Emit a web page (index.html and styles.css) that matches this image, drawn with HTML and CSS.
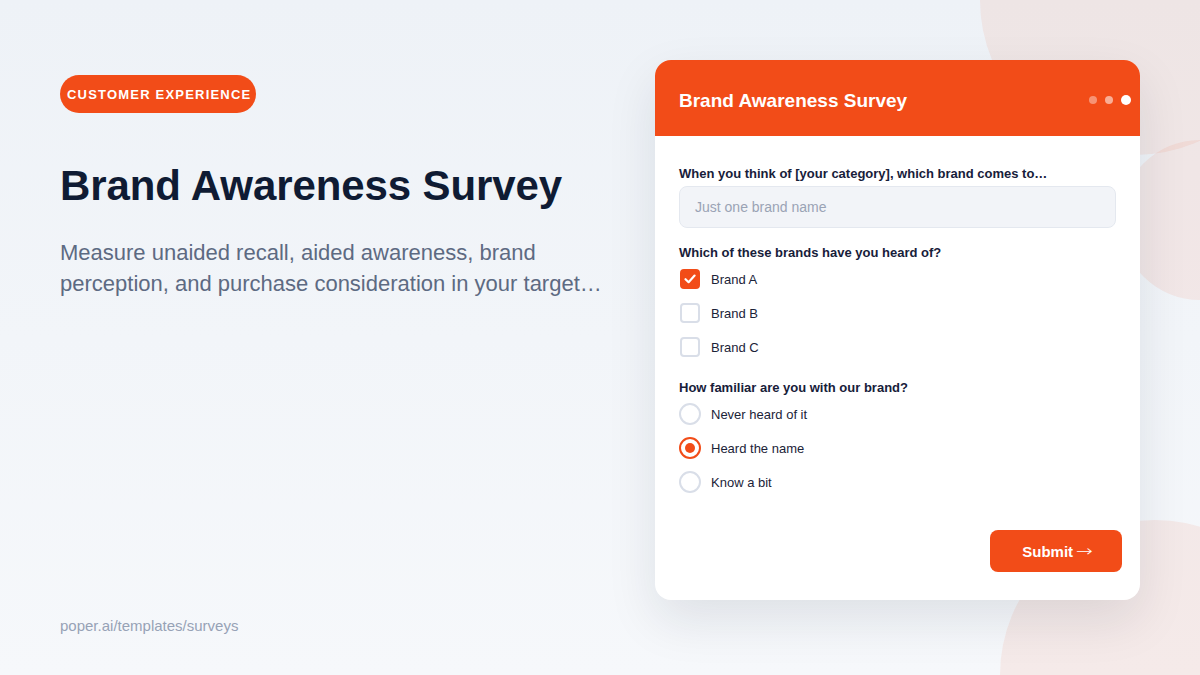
FILE: index.html
```html
<!DOCTYPE html>
<html lang="en">
<head>
<meta charset="utf-8">
<title>Brand Awareness Survey</title>
<link rel="stylesheet" href="styles.css">
</head>
<body>
<div class="page">
  <div class="blob blob-1"></div>
  <div class="blob blob-2"></div>
  <div class="blob blob-3"></div>

  <section class="intro">
    <span class="badge">CUSTOMER EXPERIENCE</span>
    <h1 class="title">Brand Awareness Survey</h1>
    <p class="desc">Measure unaided recall, aided awareness, brand perception, and purchase consideration in your target…</p>
    <div class="source">poper.ai/templates/surveys</div>
  </section>

  <section class="card">
    <header class="card-head">
      <h2 class="card-title">Brand Awareness Survey</h2>
      <div class="dots">
        <span class="dot dot-a"></span>
        <span class="dot dot-b"></span>
        <span class="dot dot-c"></span>
      </div>
    </header>
    <div class="card-body">
      <div class="q q-first">
        <div class="q-label">When you think of [your category], which brand comes to…</div>
        <div class="input">Just one brand name</div>
      </div>
      <div class="q">
        <div class="q-label">Which of these brands have you heard of?</div>
        <div class="opt"><span class="check checked"><svg width="14" height="14" viewBox="0 0 14 14"><path d="M2.5 7.2 L5.6 10.2 L11.6 3.6" fill="none" stroke="#fff" stroke-width="2.2" stroke-linecap="round" stroke-linejoin="round"/></svg></span><span class="opt-text">Brand A</span></div>
        <div class="opt"><span class="check"></span><span class="opt-text">Brand B</span></div>
        <div class="opt"><span class="check"></span><span class="opt-text">Brand C</span></div>
      </div>
      <div class="q q-last">
        <div class="q-label">How familiar are you with our brand?</div>
        <div class="opt"><span class="radio"></span><span class="opt-text">Never heard of it</span></div>
        <div class="opt"><span class="radio selected"><span class="radio-dot"></span></span><span class="opt-text">Heard the name</span></div>
        <div class="opt"><span class="radio"></span><span class="opt-text">Know a bit</span></div>
      </div>
    </div>
    <footer class="card-foot">
      <button class="submit">Submit <span class="arrow">→</span></button>
    </footer>
  </section>
</div>
</body>
</html>
```

FILE: styles.css
```css
* { box-sizing: border-box; }
html, body { margin: 0; padding: 0; }
body {
  width: 1200px;
  height: 675px;
  overflow: hidden;
  font-family: "Liberation Sans", Arial, sans-serif;
}
.page {
  position: relative;
  width: 1200px;
  height: 675px;
  overflow: hidden;
  background: linear-gradient(180deg, #eef2f7 0%, #f6f8fb 100%);
  display: flex;
  justify-content: space-between;
  padding: 60px 60px 0 60px;
}
.blob {
  position: absolute;
  border-radius: 50%;
  background: rgba(242, 76, 24, 0.08);
}
.blob-1 { width: 310px; height: 310px; left: 980px; top: -155px; }
.blob-2 { width: 160px; height: 160px; left: 1120px; top: 140px; }
.blob-3 { width: 310px; height: 310px; left: 1000px; top: 520px; }

.intro {
  position: relative;
  display: flex;
  flex-direction: column;
  align-items: flex-start;
  padding-top: 15px;
  width: 560px;
}
.badge {
  display: inline-flex;
  align-items: center;
  height: 38px;
  padding: 0 5px 0 7px;
  border-radius: 19px;
  background: #f24c18;
  color: #fff;
  font-size: 13px;
  font-weight: 700;
  letter-spacing: 1.2px;
}
.title {
  margin: 49px 0 0 0;
  font-size: 42px;
  line-height: 48px;
  font-weight: 700;
  color: #0f1b33;
  letter-spacing: -0.1px;
}
.desc {
  margin: 27px 0 0 0;
  font-size: 22px;
  line-height: 31px;
  color: #5d6a82;
  width: 560px;
}
.source {
  margin-top: auto;
  margin-bottom: 41px;
  font-size: 15px;
  line-height: 17px;
  color: #97a2b6;
}

.card {
  position: relative;
  width: 485px;
  height: 540px;
  background: #fff;
  border-radius: 16px;
  overflow: hidden;
  box-shadow: 0 20px 50px rgba(15, 27, 51, 0.10);
  display: flex;
  flex-direction: column;
}
.card-head {
  height: 76px;
  flex: none;
  background: #f24c18;
  display: flex;
  align-items: center;
  justify-content: space-between;
  padding: 6px 9px 0 24px;
}
.card-title {
  margin: 0;
  font-size: 19px;
  font-weight: 700;
  color: #fff;
  line-height: 24px;
}
.dots {
  display: flex;
  align-items: center;
  gap: 8px;
  position: relative;
  top: -1px;
}
.dot {
  width: 8px;
  height: 8px;
  border-radius: 50%;
  background: #fff;
}
.dot-a { opacity: 0.4; }
.dot-b { opacity: 0.55; }
.dot-c { width: 10px; height: 10px; opacity: 1; }

.card-body {
  flex: 1;
  padding: 29px 24px 0 24px;
}
.q-label {
  font-size: 13px;
  font-weight: 700;
  line-height: 18px;
  color: #17203a;
}
.q-first .q-label { margin-bottom: 3px; }
.q { margin-top: 16px; }
.q-first { margin-top: 0; }
.q-last { margin-top: 15px; }
.input {
  height: 42px;
  border: 1px solid #e4e8ef;
  background: #f2f4f8;
  border-radius: 8px;
  display: flex;
  align-items: center;
  padding-left: 15px;
  font-size: 14px;
  color: #9aa3b5;
}
.opt {
  height: 34px;
  display: flex;
  align-items: center;
  padding-left: 1px;
}
.opt-text {
  font-size: 13px;
  color: #1b2338;
  margin-left: 11px;
}
.check {
  width: 20px;
  height: 20px;
  border-radius: 4px;
  border: 2px solid #d9dee8;
  display: flex;
  align-items: center;
  justify-content: center;
  flex: none;
}
.check.checked {
  background: #f24c18;
  border-color: #f24c18;
}
.radio {
  width: 22px;
  height: 22px;
  border-radius: 50%;
  border: 2px solid #d9dee8;
  display: flex;
  align-items: center;
  justify-content: center;
  flex: none;
  margin-left: -1px;
  margin-right: -1px;
}
.radio.selected { border-color: #f24c18; }
.radio-dot {
  width: 10px;
  height: 10px;
  border-radius: 50%;
  background: #f24c18;
}

.card-foot {
  flex: none;
  display: flex;
  justify-content: flex-end;
  padding: 0 18px 28px 18px;
}
.submit {
  width: 132px;
  height: 42px;
  border: none;
  border-radius: 8px;
  background: #f24c18;
  color: #fff;
  font-family: "Liberation Sans", Arial, sans-serif;
  font-size: 15px;
  font-weight: 700;
  cursor: pointer;
  display: flex;
  align-items: center;
  justify-content: center;
  padding: 0 0 0 1px;
}
.arrow {
  font-family: "DejaVu Sans", sans-serif;
  font-weight: 200;
  font-size: 15px;
  margin-left: 5px;
  transform: scaleX(1.35);
}
```
